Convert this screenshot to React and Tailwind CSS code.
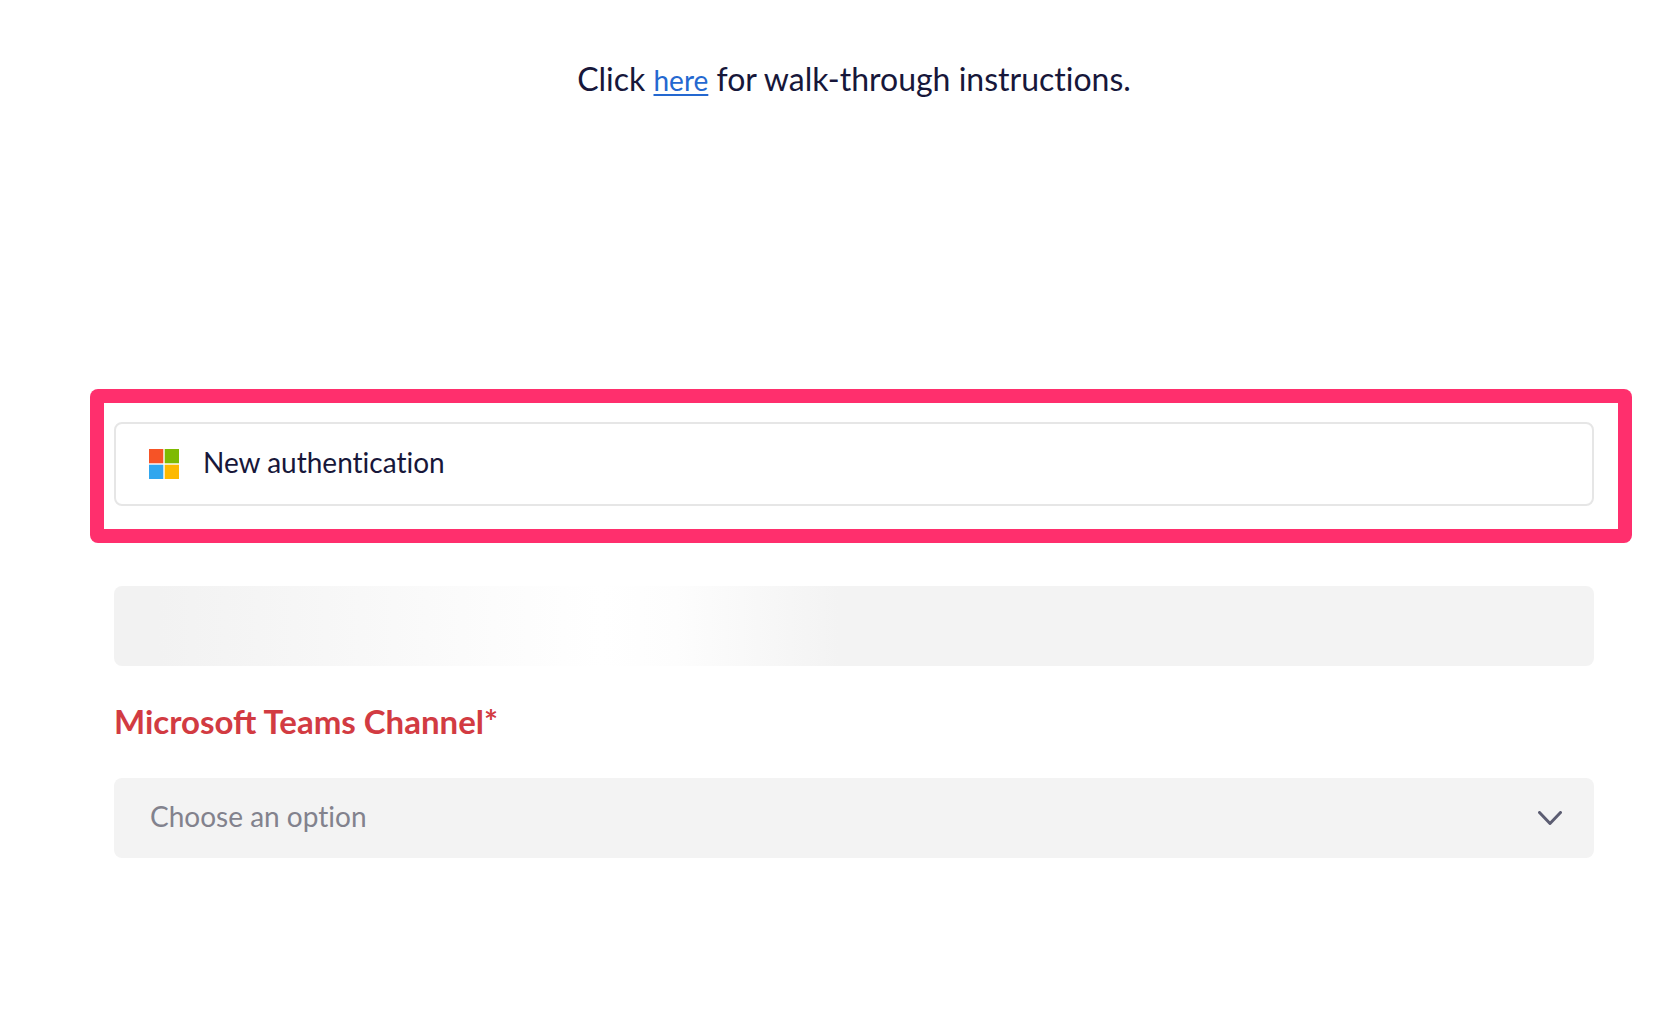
import clsx from 'clsx';

const OPTIONS = ['General', 'Announcements', 'Support'];

function MicrosoftLogo({ className }) {
    return (
        <svg viewBox="0 0 30 30" className={className} aria-hidden="true">
            <rect x="0" y="0" width="14.3" height="14.3" fill="#f65326" />
            <rect x="15.7" y="0" width="14.3" height="14.3" fill="#7eba02" />
            <rect x="0" y="15.7" width="14.3" height="14.3" fill="#30a6ee" />
            <rect x="15.7" y="15.7" width="14.3" height="14.3" fill="#fdb900" />
        </svg>
    );
}

function ChevronIcon({ className }) {
    return (
        <svg viewBox="0 0 24 14" fill="none" className={className} aria-hidden="true">
            <path d="M1.5 1.5 L12 12.5 L22.5 1.5" stroke="#5c5d72" strokeWidth="3" strokeLinecap="round" strokeLinejoin="round" />
        </svg>
    );
}

function Skeleton({ className }) {
    return (
        <div
            className={clsx(
                'h-20 rounded-lg bg-[linear-gradient(to_right,#f2f2f2_3%,#fdfdfd_28%,#ffffff_33%,#fdfdfd_38%,#f3f3f3_49%)]',
                className
            )}
        />
    );
}

export default function App() {
    return (
        <main className="min-h-screen bg-white pt-[55px] pr-[38px] pl-[90px] font-['Lato','Open_Sans',sans-serif] text-[#17173a]">
            <p className="pr-[38px] pl-6 text-center text-[32px] leading-12 [font-variant-ligatures:none]">
                Click{' '}
                <a href="#walk-through" className="text-[28px] text-[#2468d0] underline decoration-2 underline-offset-3">here</a>
                {' '}for walk-through instructions.
            </p>

            <section className="mt-[285px] rounded-lg bg-[#ff2f6d] p-3.5">
                <div className="bg-white pt-[19px] pr-6 pb-[23px] pl-2.5">
                    <button type="button" className="flex h-21 w-full items-center gap-6 rounded-lg border-2 border-[#e6e6e6] bg-white px-[33px] text-left text-[28px] [font-variant-ligatures:none]">
                        <MicrosoftLogo className="size-[30px]" />
                        <span className="pb-1">New authentication</span>
                    </button>
                </div>
            </section>

            <div className="mt-[43px] pr-[38px] pl-6">
                <Skeleton />

                <label htmlFor="channel" className="mt-[31px] block text-[33px] leading-12 font-bold text-[#d23b42]">
                    Microsoft Teams Channel*
                </label>

                <div className="mt-[33px] grid items-center">
                    <select
                        id="channel"
                        defaultValue=""
                        className="col-start-1 row-start-1 h-20 w-full appearance-none rounded-lg bg-[#f3f3f3] px-9 pb-1 text-[28px] text-[#82828d] [font-variant-ligatures:none]"
                    >
                        <option value="" disabled>Choose an option</option>
                        {OPTIONS.map((option) => (
                            <option key={option} value={option}>{option}</option>
                        ))}
                    </select>
                    <ChevronIcon className="pointer-events-none col-start-1 row-start-1 mr-8 w-6 justify-self-end" />
                </div>
            </div>
        </main>
    );
}
